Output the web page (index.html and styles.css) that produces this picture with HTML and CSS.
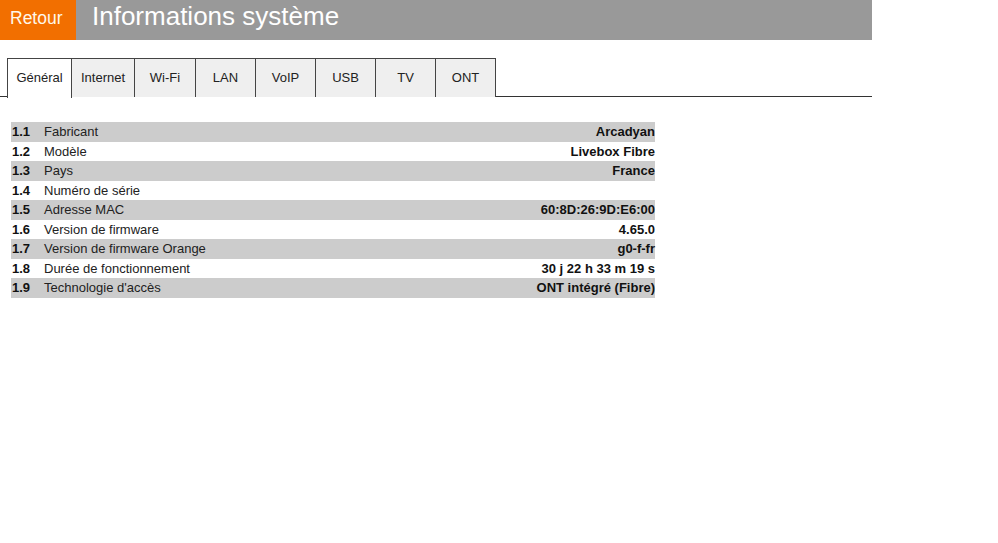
FILE: index.html
```html
<!DOCTYPE html>
<html lang="fr">
<head>
  <meta charset="UTF-8" />
  <title>Informations système</title>
  <link rel="stylesheet" href="styles.css">
</head>
<body>
<div class="page">
  <div class="top-bar">
    <div class="back-btn">Retour</div>
    <div class="page-title">Informations système</div>
  </div>

  <!-- Tabs -->
  <div class="tabs">
    <div class="tab tab-active tab-first">Général</div>
    <div class="tab tab-internet">Internet</div>
    <div class="tab tab-wifi">Wi-Fi</div>
    <div class="tab">LAN</div>
    <div class="tab">VoIP</div>
    <div class="tab">USB</div>
    <div class="tab">TV</div>
    <div class="tab">ONT</div>
  </div>

  <!-- General info -->
  <div class="info-table">
    <div class="info-row"><span class="info-num">1.1</span><span class="info-label">Fabricant</span><span class="info-value">Arcadyan</span></div>
    <div class="info-row"><span class="info-num">1.2</span><span class="info-label">Modèle</span><span class="info-value">Livebox Fibre</span></div>
    <div class="info-row"><span class="info-num">1.3</span><span class="info-label">Pays</span><span class="info-value">France</span></div>
    <div class="info-row"><span class="info-num">1.4</span><span class="info-label">Numéro de série</span><span class="info-value"></span></div>
    <div class="info-row"><span class="info-num">1.5</span><span class="info-label">Adresse MAC</span><span class="info-value">60:8D:26:9D:E6:00</span></div>
    <div class="info-row"><span class="info-num">1.6</span><span class="info-label">Version de firmware</span><span class="info-value">4.65.0</span></div>
    <div class="info-row"><span class="info-num">1.7</span><span class="info-label">Version de firmware Orange</span><span class="info-value">g0-f-fr</span></div>
    <div class="info-row"><span class="info-num">1.8</span><span class="info-label">Durée de fonctionnement</span><span class="info-value">30 j 22 h 33 m 19 s</span></div>
    <div class="info-row"><span class="info-num">1.9</span><span class="info-label">Technologie d'accès</span><span class="info-value">ONT intégré (Fibre)</span></div>
  </div>
</div>
</body>
</html>
```

FILE: styles.css
```css
body, html {
  margin: 0;
  padding: 0;
  background: #fff;
  font-family: 'Liberation Sans', Arial, sans-serif;
  font-size: 13px;
  color: #222;
}
.page {
  width: 872px;
}
.top-bar {
  display: flex;
  height: 40px;
  background: #999;
}
.back-btn {
  width: 76px;
  background: #f26f00;
  color: #fff8ea;
  font-size: 17.5px;
  line-height: 36px;
  padding-left: 10px;
  box-sizing: border-box;
}
.page-title {
  padding-left: 16px;
  color: #fff;
  font-size: 26px;
  line-height: 32px;
}
.tabs {
  display: flex;
  margin-top: 18px;
  padding-left: 7px;
  border-bottom: 1px solid #333;
  height: 38px;
}
.tab {
  width: 59px;
  height: 38px;
  line-height: 38px;
  text-align: center;
  background: #efefef;
  border: 1px solid #444;
  border-left: none;
  border-bottom: none;
  color: #222;
}
.tab-first {
  width: 63px;
  border-left: 1px solid #444;
}
.tab-internet {
  width: 62px;
}
.tab-wifi {
  width: 60px;
}
.tab-active {
  background: #fff;
  height: 39px;
}
.info-table {
  margin: 25px 0 0 11px;
  width: 644px;
}
.info-row {
  display: flex;
  height: 19.55px;
  line-height: 19.55px;
}
.info-row:nth-child(odd) {
  background: #ccc;
}
.info-num {
  width: 33px;
  padding-left: 1px;
  box-sizing: border-box;
  font-weight: bold;
  color: #111;
}
.info-label {
  flex: 1;
}
.info-value {
  font-weight: bold;
  color: #111;
}
```
